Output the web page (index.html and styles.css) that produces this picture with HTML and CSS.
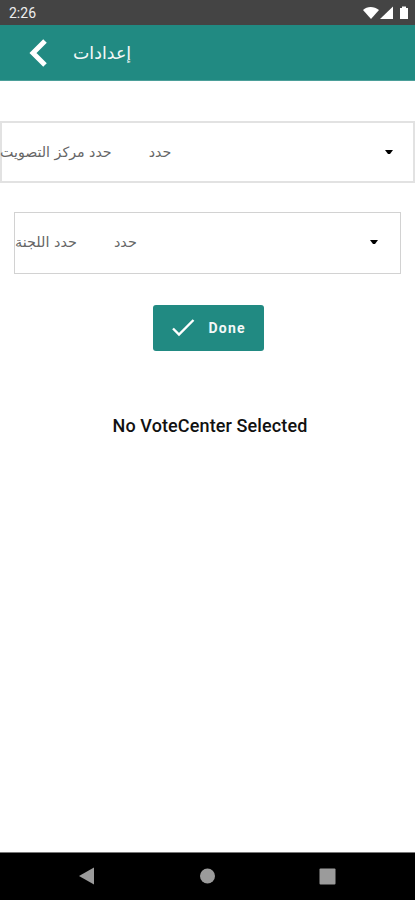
FILE: index.html
```html
<!DOCTYPE html>
<html lang="ar">
<head>
<meta charset="utf-8">
<title>إعدادات</title>
<link rel="stylesheet" href="styles.css">
</head>
<body>
<div class="screen">
  <div class="status">
    <span class="clock">2:26</span>
    <svg class="status-icons" width="46" height="16" viewBox="0 0 46 16" fill="#fff">
      <path d="M1 5C5 1 12 1 17 5L9 14Z"/>
      <path d="M18 14L31 1.500V14Z"/>
      <path d="M38 3h2V1.500h4V3h2v11h-8Z"/>
    </svg>
  </div>
  <header class="bar">
    <svg class="back" width="20" height="30" viewBox="0 0 20 30" fill="none" stroke="#fff" stroke-width="5"><path d="M17 3L5 15L17 27"/></svg>
    <h1 class="title" dir="rtl">إعدادات</h1>
  </header>
  <main class="content">
    <div class="field">
      <span class="label center" dir="rtl">حدد مركز التصويت</span>
      <span class="value" dir="rtl">حدد</span>
      <svg class="caret" width="8" height="4" viewBox="0 0 8 4"><path d="M0 0H8L5 4H3Z"/></svg>
    </div>
    <div class="field inset">
      <span class="label" dir="rtl">حدد اللجنة</span>
      <span class="value" dir="rtl">حدد</span>
      <svg class="caret" width="8" height="4" viewBox="0 0 8 4"><path d="M0 0H8L5 4H3Z"/></svg>
    </div>
    <button class="done">
      <svg width="24" height="18" viewBox="0 0 24 18" fill="none" stroke="#fff" stroke-width="2.400"><path d="M1 9.500L7 15.500L21.500 1"/></svg>
      <span>Done</span>
    </button>
    <p class="message">No VoteCenter Selected</p>
  </main>
  <nav class="nav">
    <svg width="16" height="18" viewBox="0 0 16 18" fill="#9b9b9b"><path d="M0 9L15 0.500V17.500Z"/></svg>
    <svg width="16" height="16" viewBox="0 0 16 16" fill="#9b9b9b"><circle cx="8.500" cy="8" r="7.500"/></svg>
    <svg width="17" height="17" viewBox="0 0 17 17" fill="#9b9b9b"><rect x=".5" y=".5" width="16" height="16" rx="1"/></svg>
  </nav>
</div>
</body>
</html>
```
FILE: styles.css
```css
* { box-sizing: border-box; }
body { margin: 0; background: #fff; font-family: Roboto, "DejaVu Sans", sans-serif; }
.screen { display: flex; flex-direction: column; width: 415px; height: 900px; overflow: hidden; }
.status { display: flex; justify-content: space-between; align-items: center; height: 25px; padding: 0 7px 0 9px; background: #444; color: #eee; }
.clock { font-size: 14px; }
.bar { display: flex; align-items: center; height: 56px; padding-left: 28px; background: #218a82; border-bottom: 1px solid #4b9f99; }
.title { margin: 0 0 0 25px; font: 400 17.4px "DejaVu Sans", sans-serif; color: #f4f8f8; white-space: nowrap; }
.content { display: flex; flex: 1; flex-direction: column; align-items: center; padding-top: 40px; }
.field { display: flex; align-items: center; width: 415px; height: 62px; padding: 0 20px 0 0; border: 2px solid #e2e2e2; font: 400 14.2px "DejaVu Sans", sans-serif; color: #666; white-space: nowrap; }
.field.inset { width: 387px; margin: 29px 0 0; padding: 0 22px 2px 0; border: 1px solid #d2d2d2; font-size: 14.4px; }
.label.center { margin-left: -2px; }
.value { margin-left: 37px; }
.caret { margin-left: auto; }
.done { display: flex; align-items: center; gap: 13px; width: 111px; height: 46px; margin: 31px 0 0 1px; padding: 0 0 0 19px; border: 0; border-radius: 3px; background: #218a82; color: #f4f8f8; font: 700 14px Roboto, sans-serif; letter-spacing: 1.2px; }
.message { margin: 64px 0 0 5px; font-size: 18px; font-weight: 500; line-height: 22px; letter-spacing: 0.12px; color: #111; }
.nav { display: flex; align-items: center; justify-content: space-between; height: 48px; padding: 0 79px 1px 79px; border-top: 1px solid #777; background: #000; }
```
